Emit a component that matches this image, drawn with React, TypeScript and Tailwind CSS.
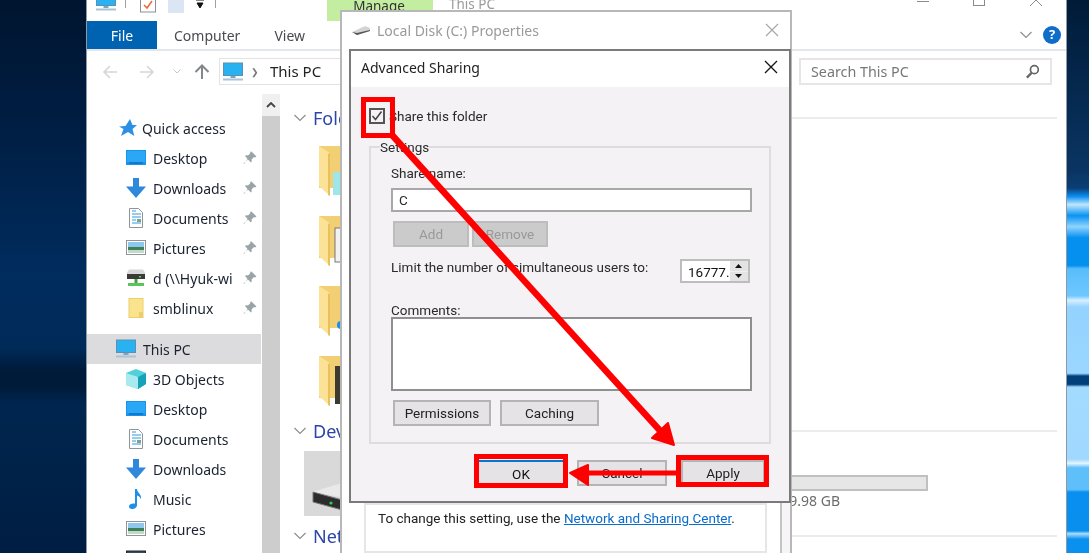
import type { ReactNode } from 'react';

function MonitorIcon({ className = 'h-[20px] w-[20px]' }: { className?: string }) {
  return (
    <svg viewBox="0 0 20 20" className={className}>
      <rect x="0.5" y="1" width="19" height="12.5" fill="#29b2f2" stroke="#5f8fb0" strokeWidth="1" />
      <rect x="7.5" y="14" width="5" height="2" fill="#7da6c0" />
      <rect x="0" y="16.5" width="20" height="2" fill="#a9c4d6" />
    </svg>
  );
}

function DesktopIcon() {
  return (
    <svg viewBox="0 0 20 20" className="h-[20px] w-[20px]">
      <rect x="0" y="2" width="20" height="15" fill="#1a93ee" />
      <rect x="1" y="3" width="18" height="11" fill="#2aa7f5" />
      <rect x="3" y="14.5" width="14" height="1" fill="#0b5fa8" />
    </svg>
  );
}

function DownloadIcon() {
  return (
    <svg viewBox="0 0 20 20" className="h-[20px] w-[20px]">
      <path d="M7 0h6v8.5h7L10 20 0 8.5h7z" fill="#2f88dc" />
    </svg>
  );
}

function DocIcon() {
  return (
    <svg viewBox="0 0 20 20" className="h-[20px] w-[20px]">
      <path d="M3.5 0.5h9l4 4v15h-13z" fill="#fff" stroke="#8f9499" />
      <path d="M6 3h4M6 6h9M6 9h9M6 12h4M6 15h9" stroke="#2f9be0" strokeWidth="1.2" />
      <rect x="11" y="11" width="4" height="3" fill="#7fa18a" />
    </svg>
  );
}

function PicturesIcon() {
  return (
    <svg viewBox="0 0 20 20" className="h-[20px] w-[20px]">
      <rect x="0.5" y="2.5" width="19" height="14" fill="#fff" stroke="#8f9499" />
      <rect x="2" y="4" width="16" height="5" fill="#8fc8ee" />
      <rect x="2" y="9" width="16" height="3" fill="#3f8058" />
      <rect x="2" y="12" width="16" height="3" fill="#c5d9c9" />
    </svg>
  );
}

function NetDriveIcon() {
  return (
    <svg viewBox="0 0 20 20" className="h-[20px] w-[20px]">
      <path d="M3 1.5h14l2 3v5H1v-5z" fill="#d8d8d8" />
      <rect x="1" y="6" width="18" height="5" fill="#3a3a3a" />
      <rect x="13" y="8" width="2" height="1.4" fill="#5fe05f" />
      <rect x="8.5" y="11" width="3" height="4" fill="#3fa53f" />
      <rect x="2" y="15" width="16" height="3" fill="#5cc25c" />
    </svg>
  );
}

function SmallFolderIcon() {
  return (
    <svg viewBox="0 0 20 20" className="h-[20px] w-[20px]">
      <rect x="3" y="0.5" width="14" height="19" fill="#fbe38e" stroke="#ecce6c" />
      <rect x="13" y="14" width="4" height="5" fill="#ecce6c" />
    </svg>
  );
}

function CubeIcon() {
  return (
    <svg viewBox="0 0 20 20" className="h-[20px] w-[20px]">
      <path d="M10 0l10 4v11l-8 5-12-4V4z" fill="#4fd0da" />
      <path d="M0 4l12 4v12L0 16z" fill="#a8eaf0" />
      <path d="M12 8l8-4v11l-8 5z" fill="#16a3b8" />
    </svg>
  );
}

function MusicIcon() {
  return (
    <svg viewBox="0 0 20 20" className="h-[20px] w-[20px]">
      <path d="M9 0h2c0 4 5 5 4 10-1-2-2-3-4-3.5V16c0 2.5-2.5 4-5 4-2 0-3-1-3-2.500C3 15 6 14 9 14.500z" fill="#1e8fe8" />
    </svg>
  );
}

function PinIcon() {
  return (
    <svg viewBox="0 0 14 14" className="h-[14px] w-[14px]">
      <path d="M8.500 0.500l5 5-1.500 1-1-.5-2.500 2.500c.5 1.500 0 2.500-.5 3L4.500 8 1 13 0.500 12.500 5 8.500 2 5c.5-.5 1.500-1 3-.5L7.500 2 7 1z" fill="#9aa3a8" />
    </svg>
  );
}

function VideoIcon() {
  return (
    <svg viewBox="0 0 20 20" className="h-[20px] w-[20px]">
      <rect x="0.5" y="2" width="19" height="14" fill="#3c4a5a" stroke="#1e2630" />
    </svg>
  );
}

function BigFolder({ children }: { children?: ReactNode }) {
  return (
    <svg viewBox="0 0 44 50" className="h-[50px] w-[44px]">
      <rect x="0" y="0" width="44" height="42" fill="#f2cf73" />
      {children}
      <path d="M0 0l11 7v43L1 41 0 40z" fill="#fbe296" />
      <path d="M11 7v43l-2-1V8z" fill="#e9c05c" />
    </svg>
  );
}

function Chevron({ className = '' }: { className?: string }) {
  return (
    <svg viewBox="0 0 12 8" className={`h-[8px] w-[12px] ${className}`}>
      <path d="M0.500 1l5.500 5.500L11.500 1" fill="none" stroke="#8a8f96" strokeWidth="1.200" />
    </svg>
  );
}

const pinned = [
  { label: 'Desktop', icon: <DesktopIcon /> },
  { label: 'Downloads', icon: <DownloadIcon /> },
  { label: 'Documents', icon: <DocIcon /> },
  { label: 'Pictures', icon: <PicturesIcon /> },
  { label: 'd (\\\\Hyuk-wi', icon: <NetDriveIcon /> },
  { label: 'smblinux', icon: <SmallFolderIcon /> },
];

const thisPc = [
  { label: '3D Objects', icon: <CubeIcon /> },
  { label: 'Desktop', icon: <DesktopIcon /> },
  { label: 'Documents', icon: <DocIcon /> },
  { label: 'Downloads', icon: <DownloadIcon /> },
  { label: 'Music', icon: <MusicIcon /> },
  { label: 'Pictures', icon: <PicturesIcon /> },
  { label: '', icon: <VideoIcon /> },
];

function NavRow({ label, icon, pin }: { label: string; icon: ReactNode; pin?: boolean }) {
  return (
    <div className="flex h-[30px] items-center pl-[39px] pr-[4px] text-[#1a2230]">
      {icon}
      <span className="ml-[7px] flex-1 whitespace-nowrap">{label}</span>
      {pin && <PinIcon />}
    </div>
  );
}

function SectionHead({ label, className }: { label: string; className: string }) {
  return (
    <div className={`flex items-center ${className}`}>
      <Chevron />
      <span className="ml-[7px] text-[18px] leading-none text-[#2b45a8]">{label}</span>
      <div className="ml-[400px] h-[2px] flex-1 bg-[#ececec]" />
    </div>
  );
}

function DlgButton({ label, className = '' }: { label: string; className?: string }) {
  return (
    <button
      className={`flex h-[26px] items-center justify-center border-2 border-[#b4b4b4] bg-[#e6e3e6] text-[#222] ${className}`}
    >
      {label}
    </button>
  );
}

export default function App() {
  return (
    <div className="relative flex h-[553px] w-[1089px] overflow-hidden font-['Noto_Sans',sans-serif] text-[13.5px] blur-[0.4px]">
      {/* wallpaper left */}
      <div className="h-full w-[86px] bg-[linear-gradient(180deg,#00152f_0%,#001f45_25%,#002c5e_50%,#002a58_63%,#001a3a_67%,#001a3a_70%,#00264f_73%,#001d42_100%)]" />

      {/* explorer window */}
      <div className="flex h-full w-[981px] flex-col border-x border-[#8f9aa3] bg-white">
        {/* quick access row */}
        <div className="flex h-[21px] shrink-0 items-start">
          <div className="ml-[9px] -mt-[8px]">
            <MonitorIcon />
          </div>
          <div className="ml-[9px] h-[8px] w-px bg-[#a0a0a0]" />
          <svg viewBox="0 0 16 13" className="ml-[14px] h-[13px] w-[16px]">
            <rect x="0.500" y="-2" width="15" height="14" fill="#fff" stroke="#8f8f8f" />
            <path d="M4 5l3 3 5-7" fill="none" stroke="#e8683a" strokeWidth="1.500" />
          </svg>
          <div className="ml-[12px] h-[13px] w-[16px] bg-[#dbe5f4]" />
          <svg viewBox="0 0 10 9" className="ml-[11px] h-[9px] w-[10px]">
            <path d="M1 0h8M2 3h6L5 8z" stroke="#111" fill="#111" />
          </svg>
          <div className="ml-[10px] h-[8px] w-px bg-[#a0a0a0]" />
          <div className="ml-[111px] flex h-[21px] w-[106px] items-start justify-center bg-[#c3eda0] text-[#333]">
            <span className="-mt-[4px] -ml-[2px] text-[13.5px]">Manage</span>
          </div>
          <span className="-mt-[6px] ml-[16px] text-[#9a9a9a]">This PC</span>
          <div className="ml-auto flex items-start">
            <div className="mr-[44px] mt-[1px] h-px w-[12px] bg-[#8a8a8a]" />
            <div className="-mt-[6px] mr-[44px] h-[12px] w-[12px] border border-[#8a8a8a]" />
            <svg viewBox="0 0 14 14" className="-mt-[7px] mr-[23px] h-[14px] w-[14px]">
              <path d="M1 1l12 12M13 1L1 13" stroke="#8a8a8a" strokeWidth="1" />
            </svg>
          </div>
        </div>

        {/* ribbon tabs */}
        <div className="flex h-[30px] shrink-0 items-center border-b-2 border-[#e3e6ea] text-[14px]">
          <div className="flex h-full w-[70px] items-center justify-center bg-[#0063b1] text-white">File</div>
          <span className="ml-[17px] text-[#4a4a50]">Computer</span>
          <span className="ml-[34px] text-[#4a4a50]">View</span>
          <Chevron className="ml-auto" />
          <div className="ml-[11px] mr-[5px] flex h-[18px] w-[18px] items-center justify-center rounded-full bg-[#0f6cc9] text-[13px] font-bold text-white">
            ?
          </div>
        </div>

        {/* address bar */}
        <div className="flex h-[43px] shrink-0 items-center pb-[2px] text-[14px]">
          <svg viewBox="0 0 16 14" className="ml-[15px] h-[14px] w-[16px]">
            <path d="M15 7H2M8 1L2 7l6 6" fill="none" stroke="#d4d6d8" strokeWidth="1.600" />
          </svg>
          <svg viewBox="0 0 16 14" className="ml-[21px] h-[14px] w-[16px]">
            <path d="M1 7h13M8 1l6 6-6 6" fill="none" stroke="#d4d6d8" strokeWidth="1.600" />
          </svg>
          <svg viewBox="0 0 8 5" className="ml-[18px] h-[5px] w-[8px]">
            <path d="M0.500 0.500L4 4l3.500-3.500" fill="none" stroke="#c4c6c8" />
          </svg>
          <svg viewBox="0 0 16 16" className="ml-[13px] h-[16px] w-[16px]">
            <path d="M8 15V2M1.500 8L8 1.500 14.500 8" fill="none" stroke="#83878b" strokeWidth="2" />
          </svg>
          <div className="ml-[9px] flex h-[27px] w-[560px] items-center border border-[#e3e3e3]">
            <MonitorIcon className="ml-[3px] h-[20px] w-[20px]" />
            <span className="ml-[8px] text-[9px] text-[#777]">❯</span>
            <span className="ml-[11px] text-[15px] text-[#222]">This PC</span>
          </div>
          <div className="ml-[20px] flex h-[27px] w-[253px] items-center border-2 border-[#e6e6e6] px-[10px] text-[14.3px] text-[#777]">
            Search This PC
            <svg viewBox="0 0 16 16" className="ml-auto h-[15px] w-[15px]">
              <circle cx="10" cy="6" r="4.200" fill="none" stroke="#666" strokeWidth="1.800" />
              <path d="M7 9.500L2 14.500" stroke="#666" strokeWidth="2.400" />
            </svg>
          </div>
        </div>

        {/* main area */}
        <div className="flex min-h-0 flex-1 text-[14px]">
          <div className="w-[174px] shrink-0 overflow-hidden pt-[19px]">
            <div className="flex h-[30px] items-center pl-[32px] text-[#1a2230]">
              <svg viewBox="0 0 18 18" className="h-[18px] w-[18px]">
                <path d="M11 0l2.500 6H18l-4.500 4 1.800 7L9 13l-7 4 2.500-7L0 7.500 6.500 7z" fill="#2b8fe6" />
              </svg>
              <span className="ml-[5px]">Quick access</span>
            </div>
            {pinned.map((p) => (
              <NavRow key={p.label} label={p.label} icon={p.icon} pin />
            ))}
            <div className="mt-[11px] flex h-[30px] items-center bg-[#dcdbde] pl-[29px] text-[#1a2230]">
              <MonitorIcon />
              <span className="ml-[7px]">This PC</span>
            </div>
            {thisPc.map((p, i) => (
              <NavRow key={i} label={p.label} icon={p.icon} />
            ))}
          </div>

          {/* scrollbar */}
          <div className="ml-[1px] flex w-[18px] shrink-0 flex-col">
            <div className="flex h-[22px] items-center justify-center bg-[#f0f0f0]">
              <svg viewBox="0 0 10 6" className="h-[6px] w-[10px]">
                <path d="M1 5l4-4 4 4" fill="none" stroke="#444" strokeWidth="1.800" />
              </svg>
            </div>
            <div className="flex-1 bg-[#cdcdcd]" />
          </div>

          {/* content */}
          <div className="min-w-0 flex-1 overflow-hidden pl-[14px] pr-[9px]">
            <SectionHead label="Folders" className="h-[48px]" />
            <div className="ml-[25px] flex flex-col">
              <div className="h-[70px] pt-[4px]">
                <BigFolder>
                  <rect x="14" y="26" width="20" height="23" fill="#9fe6ea" />
                </BigFolder>
              </div>
              <div className="h-[70px] pt-[4px]">
                <BigFolder>
                  <rect x="16" y="12" width="20" height="34" fill="#f2f2f2" stroke="#777" />
                </BigFolder>
              </div>
              <div className="h-[70px] pt-[4px]">
                <BigFolder>
                  <circle cx="22" cy="39" r="4" fill="#1e8fe8" />
                </BigFolder>
              </div>
              <div className="h-[70px] pt-[4px]">
                <BigFolder>
                  <rect x="16" y="10" width="20" height="38" fill="#3c3a30" />
                </BigFolder>
              </div>
            </div>
            <SectionHead label="Devices" className="h-[18px]" />
            <div className="mt-[11px] flex h-[65px] items-start">
              <div className="ml-[10px] flex h-[65px] w-[120px] items-end bg-[#d9d9d9] pb-[5px] pl-[8px]">
                <svg viewBox="0 0 40 28" className="h-[28px] w-[40px]">
                  <path d="M0 9L30 0l10 6v10z" fill="#e9e9e9" />
                  <path d="M1 9l33 9v10L1 19z" fill="#2c2c2c" stroke="#777" />
                  <circle cx="19" cy="20" r="1.600" fill="#27d34a" />
                </svg>
              </div>
              <div className="ml-[16px] w-[488px] pt-[24px]">
                <div className="h-[16px] border-2 border-[#c0c0c0] bg-[#e6e6e6]" />
                <div className="-mt-[1px] w-[400px] text-right text-[#6d6d6d]">20 GB free of 59.98 GB</div>
              </div>
            </div>
            <SectionHead label="Network" className="h-[40px]" />
          </div>
        </div>
      </div>

      {/* wallpaper right */}
      <div className="h-full w-[22px] bg-[linear-gradient(180deg,#001b38_0%,#0a3563_31%,#0a3e74_34%,#0a8df0_35.500%,#bfe6ff_37%,#0a93f2_39%,#8fd4ff_41%,#0590f0_43%,#0590f0_48%,#58bdfb_48.600%,#6fc8ff_53.500%,#d8f0ff_54.300%,#94d3ff_55.500%,#9ad6ff_67.500%,#003f7a_68%,#003f7a_69.500%,#a2dbff_70%,#a0d8ff_83%,#e4f5ff_83.800%,#5ebffb_84.600%,#5fbffb_88.500%,#0a8ff0_89%,#0890ee_96%,#a8deff_96.500%,#0a90ee_97.500%)]" />

      {/* Local Disk (C:) Properties */}
      <div className="absolute left-[340px] top-[10px] flex h-[545px] w-[452px] flex-col border-2 border-[#b8b8b8] bg-white">
        <div className="flex h-[36px] shrink-0 items-center text-[14px] text-[#9a9a9a]">
          <svg viewBox="0 0 18 10" className="ml-[10px] h-[10px] w-[18px]">
            <path d="M0 7l13-6 5 2v3L5 10z" fill="#d4d4d4" />
            <path d="M0 7l5 3 13-4v-1L5 8z" fill="#555" />
          </svg>
          <span className="ml-[7px]">Local Disk (C:) Properties</span>
          <svg viewBox="0 0 14 14" className="ml-auto mr-[11px] h-[14px] w-[14px]">
            <path d="M1 1l12 12M13 1L1 13" stroke="#a8a8a8" strokeWidth="1.200" />
          </svg>
        </div>
        <div className="flex min-h-0 flex-1 flex-col justify-end">
          <div className="flex">
            <div className="ml-[22px] h-[50px] w-[403px] border-2 border-[#e6e6e6] pl-[12px] pt-[3px] font-['Roboto',sans-serif] text-[13.5px] text-[#222]">
              To change this setting, use the{' '}
              <span className="text-[#0a6ccb] underline">Network and Sharing Center</span>.
            </div>
            <div className="ml-[13px] h-[50px] flex-1 border-l-2 border-[#c4c4c4] bg-[#f6f4f7]" />
          </div>
        </div>
      </div>

      {/* Advanced Sharing */}
      <div className="absolute left-[349px] top-[49px] flex h-[454px] w-[442px] flex-col border-2 border-[#7a7a7a] bg-[#f5f2f6]">
        <div className="flex h-[36px] shrink-0 items-center bg-white pb-[4px] pl-[10px] text-[14px] text-[#222]">
          Advanced Sharing
          <svg viewBox="0 0 14 14" className="ml-auto mr-[11px] h-[14px] w-[14px]">
            <path d="M1 1l12 12M13 1L1 13" stroke="#111" strokeWidth="1.300" />
          </svg>
        </div>
        <div className="px-[18px] pt-[21px] font-['Roboto',sans-serif] text-[#2a2a2a]">
          <div className="flex h-[16px] items-center">
            <div className="flex h-[16px] w-[16px] items-center justify-center border-2 border-[#555]">
              <svg viewBox="0 0 12 12" className="h-[12px] w-[12px]">
                <path d="M1.500 6l3 3.500 6-8" fill="none" stroke="#444" strokeWidth="1.500" />
              </svg>
            </div>
            <span className="ml-[4px]">Share this folder</span>
          </div>

          <fieldset className="mt-[13px] h-[307px] w-[402px] border-2 border-[#dedcdf] pl-[20px]">
            <legend className="-ml-[11px] h-[20px] leading-[20px]">Settings</legend>
            <div className="mt-[6px] h-[20px] leading-[20px]">Share name:</div>
            <div className="mt-[5px] flex h-[24px] w-[361px] items-center border-2 border-[#a8a8a8] bg-white pl-[6px]">
              C
            </div>
            <div className="ml-[2px] mt-[9px] flex gap-[3px]">
              <div className="flex h-[26px] w-[76px] items-center justify-center border-2 border-[#bdbdbd] bg-[#cbcbcb] text-[#999]">
                Add
              </div>
              <div className="flex h-[26px] w-[76px] items-center justify-center border-2 border-[#bdbdbd] bg-[#cbcbcb] text-[#999]">
                Remove
              </div>
            </div>
            <div className="mt-[12px] flex h-[24px] w-[359px] items-start">
              <span className="-mt-[2px] whitespace-nowrap">Limit the number of simultaneous users to:</span>
              <div className="ml-auto flex h-[24px] w-[70px] border-2 border-[#bdbdbd] bg-white">
                <span className="flex-1 whitespace-nowrap pl-[6px] leading-[22px] text-[#111]">16777.</span>
                <div className="flex w-[19px] flex-col gap-px bg-[#f0f0f0] text-center">
                  <div className="flex h-[10px] items-center justify-center bg-[#e3e3e3]">
                    <svg viewBox="0 0 7 4" className="h-[4px] w-[7px]">
                      <path d="M3.500 0L7 4H0z" fill="#111" />
                    </svg>
                  </div>
                  <div className="flex h-[10px] items-center justify-center bg-[#e3e3e3]">
                    <svg viewBox="0 0 7 4" className="h-[4px] w-[7px]">
                      <path d="M0 0h7L3.500 4z" fill="#111" />
                    </svg>
                  </div>
                </div>
              </div>
            </div>
            <div className="mt-[20px] h-[14px] leading-[14px]">Comments:</div>
            <div className="h-[74px] w-[361px] border-2 border-[#8f8f8f] bg-white" />
            <div className="ml-[2px] mt-[9px] flex gap-[9px]">
              <DlgButton label="Permissions" className="w-[98px]" />
              <DlgButton label="Caching" className="w-[99px]" />
            </div>
          </fieldset>

          <div className="mt-[16px] flex w-[396px] justify-end">
            <button className="flex h-[26px] w-[84px] items-center justify-center border-t-2 border-[#0078d7] bg-[#e6e3e6] text-[#111]">
              OK
            </button>
            <DlgButton label="Cancel" className="ml-[14px] w-[90px]" />
            <DlgButton label="Apply" className="ml-[14px] w-[84px]" />
          </div>
        </div>
      </div>

      {/* red annotation layer */}
      <div className="absolute left-[361px] top-[97px] h-[41px] w-[34px] border-[5px] border-[#ff0000]" />
      <div className="absolute left-[474px] top-[454px] h-[34px] w-[94px] border-[5px] border-[#ff0000]" />
      <div className="absolute left-[676px] top-[455px] h-[32px] w-[93px] border-[5px] border-[#ff0000]" />
      <svg viewBox="0 0 1089 553" className="absolute left-0 top-0 h-[553px] w-[1089px]">
        <path d="M392 135L664 435" stroke="#ff0000" strokeWidth="6.500" fill="none" />
        <path d="M674 445L668 423 652 438z" fill="#ff0000" stroke="#ff0000" strokeWidth="2" strokeLinejoin="round" />
        <path d="M678 473H584" stroke="#ff0000" strokeWidth="5" fill="none" />
        <path d="M570 473L588 465V485z" fill="#ff0000" stroke="#ff0000" strokeWidth="2" strokeLinejoin="round" />
      </svg>
    </div>
  );
}
